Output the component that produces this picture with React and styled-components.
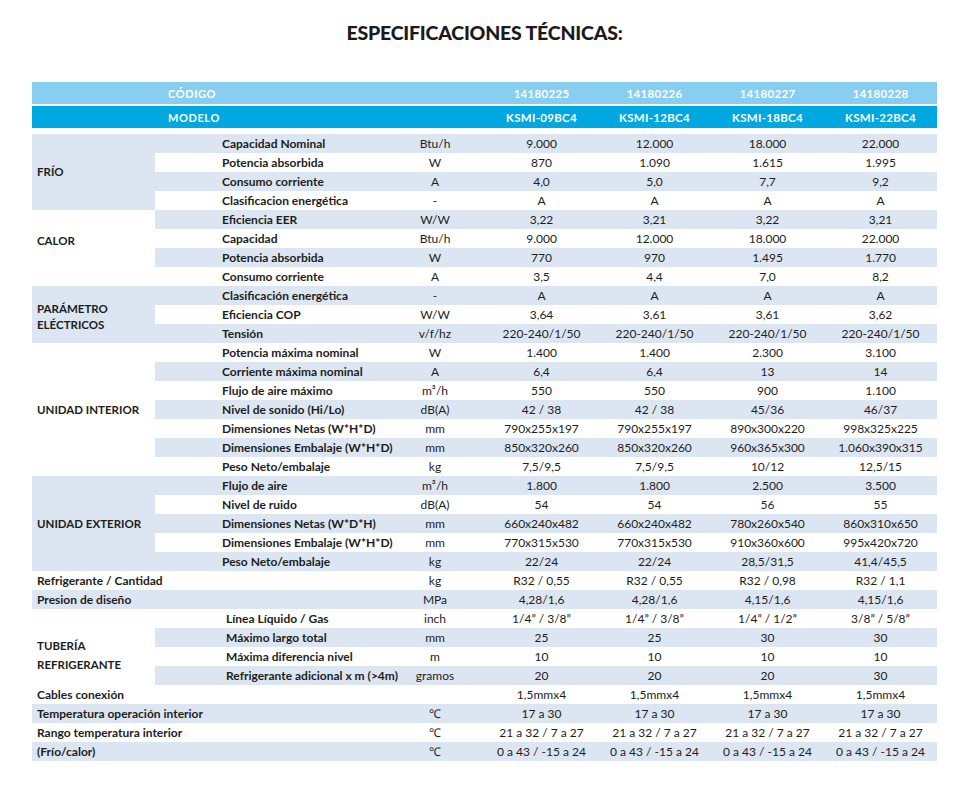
import React from 'react';
import styled, { createGlobalStyle } from 'styled-components';

const LIGHT = '#dce6f2';

const GlobalStyle = createGlobalStyle`
    body {
        margin: 0;
        background: #ffffff;
        font-family: Lato, "Open Sans", sans-serif;
        color: #1d1d1b;
    }
`;

const headerCodes = ['14180225', '14180226', '14180227', '14180228'];
const headerModels = ['KSMI-09BC4', 'KSMI-12BC4', 'KSMI-18BC4', 'KSMI-22BC4'];

const x4 = (v) => [v, v, v, v];

// shift: px the group label sits off the vertical middle (positive = lower)
const sections = [
    {
        label: ['FRÍO'], bg: LIGHT, rows: [
            ['Capacidad Nominal', 'Btu/h', ['9.000', '12.000', '18.000', '22.000']],
            ['Potencia absorbida', 'W', ['870', '1.090', '1.615', '1.995']],
            ['Consumo corriente', 'A', ['4,0', '5,0', '7,7', '9,2']],
            ['Clasificacion energética', '-', x4('A')],
        ]
    },
    {
        label: ['CALOR'], bg: '#ffffff', shift: -7, rows: [
            ['Eficiencia EER', 'W/W', ['3,22', '3,21', '3,22', '3,21']],
            ['Capacidad', 'Btu/h', ['9.000', '12.000', '18.000', '22.000']],
            ['Potencia absorbida', 'W', ['770', '970', '1.495', '1.770']],
            ['Consumo corriente', 'A', ['3,5', '4,4', '7,0', '8,2']],
        ]
    },
    {
        label: ['PARÁMETRO', 'ELÉCTRICOS'], bg: LIGHT, shift: 2, rows: [
            ['Clasificación energética', '-', x4('A')],
            ['Eficiencia COP', 'W/W', ['3,64', '3,61', '3,61', '3,62']],
            ['Tensión', 'v/f/hz', x4('220-240/1/50')],
        ]
    },
    {
        label: ['UNIDAD INTERIOR'], bg: '#ffffff', rows: [
            ['Potencia máxima nominal', 'W', ['1.400', '1.400', '2.300', '3.100']],
            ['Corriente máxima nominal', 'A', ['6,4', '6,4', '13', '14']],
            ['Flujo de aire máximo', 'm³/h', ['550', '550', '900', '1.100']],
            ['Nivel de sonido (Hi/Lo)', 'dB(A)', ['42 / 38', '42 / 38', '45/36', '46/37']],
            ['Dimensiones Netas (W*H*D)', 'mm', ['790x255x197', '790x255x197', '890x300x220', '998x325x225']],
            ['Dimensiones Embalaje (W*H*D)', 'mm', ['850x320x260', '850x320x260', '960x365x300', '1.060x390x315']],
            ['Peso Neto/embalaje', 'kg', ['7,5/9,5', '7,5/9,5', '10/12', '12,5/15']],
        ]
    },
    {
        label: ['UNIDAD EXTERIOR'], bg: LIGHT, rows: [
            ['Flujo de aire', 'm³/h', ['1.800', '1.800', '2.500', '3.500']],
            ['Nivel de ruido', 'dB(A)', ['54', '54', '56', '55']],
            ['Dimensiones Netas (W*D*H)', 'mm', ['660x240x482', '660x240x482', '780x260x540', '860x310x650']],
            ['Dimensiones Embalaje (W*H*D)', 'mm', ['770x315x530', '770x315x530', '910x360x600', '995x420x720']],
            ['Peso Neto/embalaje', 'kg', ['22/24', '22/24', '28,5/31,5', '41,4/45,5']],
        ]
    },
    { single: ['Refrigerante / Cantidad', 'kg', ['R32 / 0,55', 'R32 / 0,55', 'R32 / 0,98', 'R32 / 1,1']] },
    { single: ['Presion de diseño', 'MPa', ['4,28/1,6', '4,28/1,6', '4,15/1,6', '4,15/1,6']] },
    {
        label: ['TUBERÍA', 'REFRIGERANTE'], bg: '#ffffff', wide: true, shift: 8, rows: [
            ['Línea Líquido / Gas', 'inch', ['1/4” / 3/8”', '1/4” / 3/8”', '1/4” / 1/2”', '3/8” / 5/8”']],
            ['Máximo largo total', 'mm', ['25', '25', '30', '30']],
            ['Máxima diferencia nivel', 'm', x4('10')],
            ['Refrigerante adicional x m (>4m)', 'gramos', ['20', '20', '20', '30']],
        ]
    },
    { single: ['Cables conexión', '', x4('1,5mmx4')] },
    { single: ['Temperatura operación interior', '℃', x4('17 a 30')] },
    { single: ['Rango temperatura interior', '℃', x4('21 a 32 / 7 a 27')] },
    { single: ['(Frío/calor)', '℃', x4('0 a 43 / -15 a 24')] },
];

function buildRows() {
    const out = [];
    let index = 0;
    sections.forEach((section, s) => {
        if (section.single) {
            const [label, unit, values] = section.single;
            const striped = index % 2 === 0;
            out.push(
                <BodyRow key={`s${s}`} $striped={striped}>
                    <MainLabel colSpan={2}>{label}</MainLabel>
                    <Unit>{unit}</Unit>
                    {values.map((v, i) => <Value key={i}>{v}</Value>)}
                </BodyRow>
            );
            index += 1;
            return;
        }
        section.rows.forEach(([label, unit, values], r) => {
            const striped = index % 2 === 0;
            out.push(
                <BodyRow key={`g${s}-${r}`} $striped={striped}>
                    {r === 0 && (
                        <GroupCell
                            rowSpan={section.rows.length}
                            $bg={section.bg}
                            $shift={section.shift || 0}
                            $tall={section.wide}
                        >
                            {section.label.map((line) => <div key={line}>{line}</div>)}
                        </GroupCell>
                    )}
                    <SubLabel $wide={section.wide}>{label}</SubLabel>
                    <Unit>{unit}</Unit>
                    {values.map((v, i) => <Value key={i}>{v}</Value>)}
                </BodyRow>
            );
            index += 1;
        });
    });
    return out;
}

function App() {
    return (
        <Page>
            <GlobalStyle />
            <Title>ESPECIFICACIONES TÉCNICAS:</Title>
            <SpecTable>
                <colgroup>
                    <col style={{ width: 123 }} />
                    <col style={{ width: 230 }} />
                    <col style={{ width: 100 }} />
                    <col style={{ width: 113 }} />
                    <col style={{ width: 113 }} />
                    <col style={{ width: 113 }} />
                    <col style={{ width: 113 }} />
                </colgroup>
                <thead>
                    <HeadRow $tone="#88cef1">
                        <HeadCell />
                        <HeadTitle colSpan={2}>CÓDIGO</HeadTitle>
                        {headerCodes.map((c) => <HeadCell key={c}>{c}</HeadCell>)}
                    </HeadRow>
                    <Gap $h={2}><td colSpan={7} /></Gap>
                    <HeadRow $tone="#00a8e1">
                        <HeadCell />
                        <HeadTitle colSpan={2}>MODELO</HeadTitle>
                        {headerModels.map((c) => <HeadCell key={c}>{c}</HeadCell>)}
                    </HeadRow>
                    <Gap $h={6}><td colSpan={7} /></Gap>
                </thead>
                <tbody>{buildRows()}</tbody>
            </SpecTable>
        </Page>
    );
}

const Page = styled.div`
    width: 905px;
    padding: 22px 25px 40px 32px;
`;

const Title = styled.h1`
    margin: 0 0 38px;
    text-align: center;
    font-family: Lato, sans-serif;
    font-weight: 900;
    font-size: 19.5px;
    line-height: 22px;
    letter-spacing: -0.2px;
    color: #1a1a1a;
`;

const SpecTable = styled.table`
    width: 905px;
    table-layout: fixed;
    border-collapse: collapse;
    border-spacing: 0;
    font-family: Lato, sans-serif;
    color: #1d1d1b;

    td, th {
        padding: 0;
        white-space: nowrap;
    }
`;

const HeadRow = styled.tr`
    background: ${(p) => p.$tone};
    height: 22px;
`;

const HeadCell = styled.th`
    color: #ffffff;
    font-size: 11.5px;
    font-weight: 700;
    text-align: center;
    letter-spacing: 0.3px;
`;

const HeadTitle = styled(HeadCell)`
    text-align: left;
    padding-left: 13px !important;
    font-size: 11px;
    letter-spacing: 0.6px;
`;

const Gap = styled.tr`
    height: ${(p) => p.$h}px;
    td { height: ${(p) => p.$h}px; }
`;

const BodyRow = styled.tr`
    height: 19px;

    & > td {
        background: ${(p) => (p.$striped ? LIGHT : '#ffffff')};
    }
`;

const GroupCell = styled.td`
    && {
        background: ${(p) => p.$bg};
    }
    padding-left: 5px !important;
    padding-top: ${(p) => Math.max(p.$shift, 0) * 2}px !important;
    padding-bottom: ${(p) => Math.max(-p.$shift, 0) * 2}px !important;
    font-size: 11.5px;
    font-weight: 700;
    line-height: ${(p) => (p.$tall ? 19 : 16)}px;
    vertical-align: middle;
`;

const SubLabel = styled.td`
    padding-left: ${(p) => (p.$wide ? 71 : 67)}px !important;
    font-size: 12px;
    font-weight: 700;
    line-height: 19px;
`;

const MainLabel = styled.td`
    padding-left: 5px !important;
    font-size: 12px;
    font-weight: 700;
    line-height: 19px;
`;

const Unit = styled.td`
    text-align: center;
    font-size: 12px;
    line-height: 19px;
`;

const Value = styled.td`
    text-align: center;
    font-size: 12px;
    line-height: 19px;
`;

export default App;
